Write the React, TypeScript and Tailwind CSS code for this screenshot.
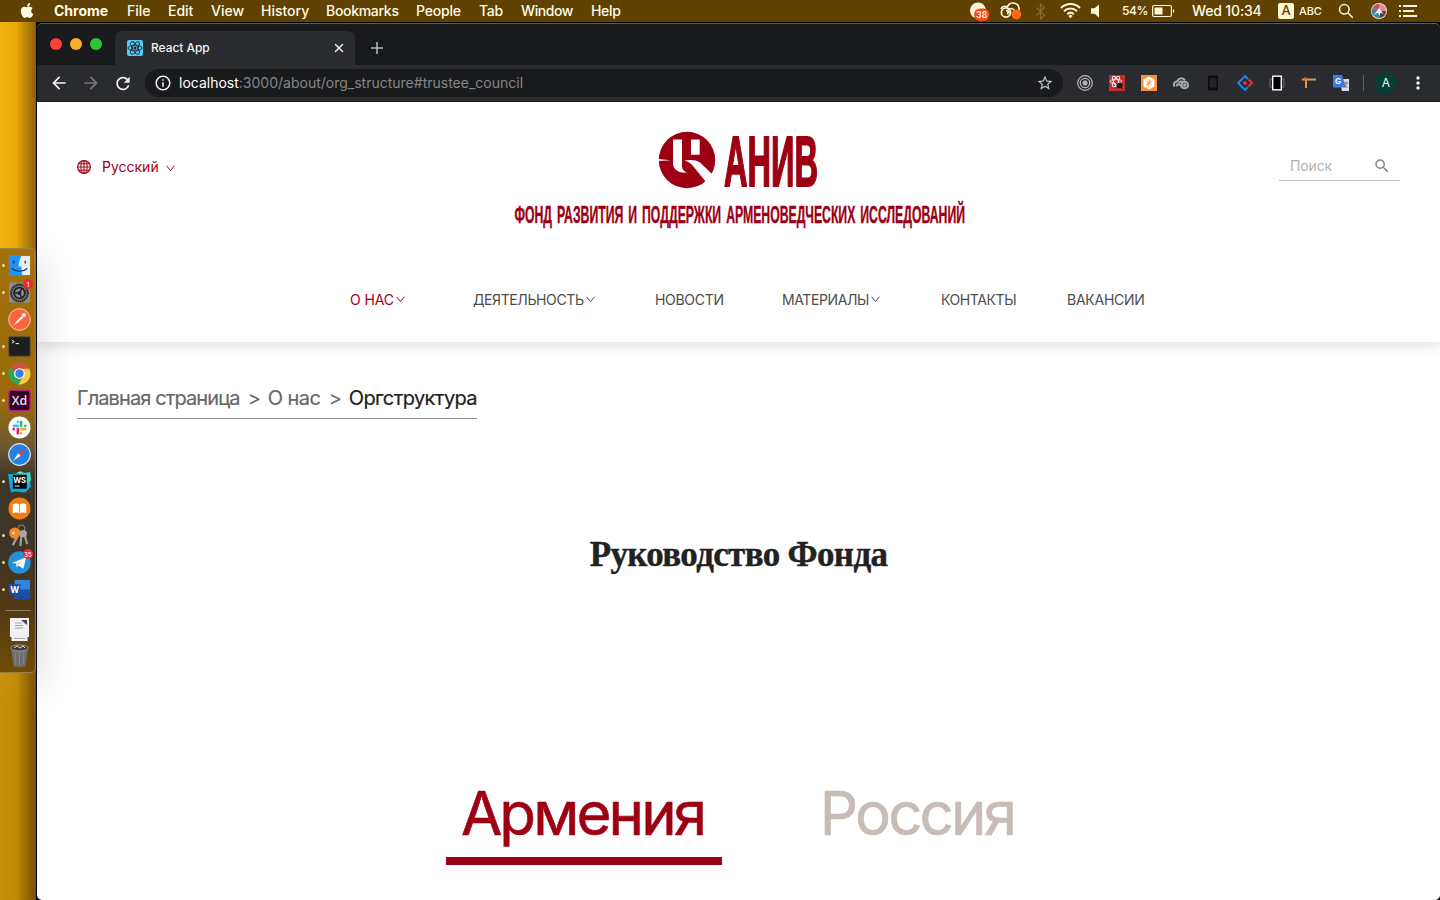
import React from "react";
import { FiX } from "react-icons/fi";
import { MdArrowBack, MdArrowForward, MdRefresh, MdInfoOutline, MdStarOutline, MdSearch, MdMoreVert } from "react-icons/md";
import { FaApple } from "react-icons/fa";

const menu: [string, string][] = [
  ["File", "w-[41px]"],
  ["Edit", "w-[43px]"],
  ["View", "w-[50px]"],
  ["History", "w-[65px]"],
  ["Bookmarks", "w-[90px] tracking-[-0.3px]"],
  ["People", "w-[63px] tracking-[-0.2px]"],
  ["Tab", "w-[42px] tracking-[-0.3px]"],
  ["Window", "w-[70px] tracking-[-0.4px]"],
  ["Help", "w-[60px] tracking-[-0.3px]"],
];

function StatusIcons() {
  return (
    <svg width="150" height="22" viewBox="0 0 150 22" className="shrink-0">
      <circle cx="8" cy="10.5" r="8" fill="#fff6d8" />
      <rect x="4" y="8.500" width="15.500" height="12.500" rx="6.200" fill="#ff4613" />
      <text x="11.800" y="18.200" textAnchor="middle" fontSize="8.500" fontWeight="600" fill="#fff" fontFamily="Inter, sans-serif">38</text>
      <g fill="none" stroke="#fff6d8" strokeWidth="1.700">
        <circle cx="36" cy="12.500" r="4.600" />
        <path d="M31 9c1-2.500 4-3.200 6.500-2.200A6 6 0 0 1 49 10" />
        <path d="M38.500 14.500c-2-2-1-6 2.500-6 2 0 3 1 4 2.500M36 10.500c2 0 3 1 4.500 3" strokeWidth="1.400" />
      </g>
      <circle cx="46.500" cy="14.500" r="4.800" fill="#ff6a13" />
      <path d="M66.500 7.500l8 8-4 3.500V4l4 3.500-8 8" fill="none" stroke="#8a6a2c" strokeWidth="1.200" />
      <g fill="none" stroke="#fff6d8" strokeWidth="2">
        <path d="M91 8c5.500-5.200 13.500-5.200 19 0" />
        <path d="M94 11.200c3.800-3.600 9.200-3.600 13 0" />
        <path d="M97.200 14.200c2-1.900 4.600-1.900 6.600 0" />
      </g>
      <path d="M98.300 16l2.200-1.600 2.200 1.600-2.200 2.200z" fill="#fff6d8" />
      <path d="M121 8.200h3.600l4.400-3.700v13l-4.400-3.700H121z" fill="#fff6d8" />
    </svg>
  );
}

function MenuBar() {
  return (
    <header className="flex h-[22px] w-full shrink-0 items-center bg-[#5f4202] text-[14px] font-medium text-[#fffbe6]">
      <FaApple className="mb-[2px] ml-[20px] h-[17px] w-[14px]" />
      <span className="ml-[20px] w-[73px] pb-[2px] font-bold">Chrome</span>
      {menu.map(([label, cls]) => (
        <span key={label} className={`pb-[2px] ${cls}`}>{label}</span>
      ))}
      <div className="ml-[319px] flex h-full items-center">
        <StatusIcons />
        <span className="ml-[2px] w-[30px] text-[12px] tracking-[-0.4px]">54%</span>
        <svg width="24" height="14" viewBox="0 0 24 14" className="shrink-0">
          <rect x="0.600" y="1.500" width="18.800" height="11" rx="1.500" fill="none" stroke="#fff6d8" strokeWidth="1.200" />
          <rect x="2.500" y="3.500" width="8" height="7" fill="#fff6d8" />
          <path d="M21 5v4c1.800-.8 1.800-3.200 0-4z" fill="#fff6d8" />
        </svg>
        <span className="ml-[16px] w-[86px] pb-[2px] tracking-[-0.15px]">Wed 10:34</span>
        <span className="flex h-[16px] w-[16px] items-center justify-center rounded-[2px] bg-[#fff6d8] text-[13px] text-[#5f4202]">A</span>
        <span className="ml-[5px] w-[39px] text-[11px] tracking-[-0.1px]">ABC</span>
        <svg width="16" height="16" viewBox="0 0 16 16" fill="none" stroke="#fff6d8" strokeWidth="1.500">
          <circle cx="6.300" cy="6.300" r="4.800" />
          <path d="M9.800 9.800l5 5" />
        </svg>
        <svg width="16" height="16" viewBox="0 0 16 16" className="ml-[17px]">
          <circle cx="8" cy="8" r="8" fill="#f2e6dc" />
          <path d="M8 8L1.500 5A7 7 0 0 1 8 1z" fill="#c9506a" />
          <path d="M8 8V1a7 7 0 0 1 7 7z" fill="#e9849c" />
          <path d="M8 8h7a7 7 0 0 1-6 7z" fill="#4b4446" />
          <path d="M8 8l1 7a7 7 0 0 1-7.500-10z" fill="#3f87a0" />
          <path d="M8 5l4.500 6-3.500-1.500V13L7 9.500 3 12z" fill="#fff" />
        </svg>
        <svg width="18" height="14" viewBox="0 0 18 14" className="ml-[12px]" stroke="#fff6d8" strokeWidth="2">
          <path d="M0 2h2M4 2h14M0 7h2M4 7h11M0 12h2M4 12h14" />
        </svg>
      </div>
    </header>
  );
}

function Tile({ children }: { children: React.ReactNode }) {
  return (
    <svg width="23" height="23" viewBox="0 0 24 24" className="shrink-0">
      {children}
    </svg>
  );
}

const dock: { dot: boolean; art: React.ReactNode }[] = [
  {
    dot: true,
    art: (
      <>
        <rect x="1" y="2" width="22" height="20" fill="#e4ecf4" />
        <path d="M1 2h13c-2 4-3 7-3 11h3c0 3 0 6 1 9H1z" fill="#1e93f5" />
        <path d="M6 7v3M18 7v3M4 15c4 4 12 4 16 0" stroke="#1b2b44" strokeWidth="1.300" fill="none" />
      </>
    ),
  },
  {
    dot: true,
    art: (
      <>
        <rect x="1" y="1.500" width="22" height="21" rx="1.500" fill="#8c8d90" />
        <circle cx="12" cy="12.500" r="8.700" fill="#77787b" stroke="#2b2b2c" strokeWidth="2.200" strokeDasharray="1.800 0.500" />
        <circle cx="12" cy="12.500" r="5.600" fill="#8c8d90" stroke="#222" strokeWidth="1.800" />
        <circle cx="12" cy="12.500" r="2" fill="#222" />
        <path d="M12 12.500l3-5M12 12.500l2.500 5.500M12 12.500H6" stroke="#222" strokeWidth="1.400" />
      </>
    ),
  },
  {
    dot: false,
    art: (
      <>
        <circle cx="12" cy="12" r="11.300" fill="#fb653c" stroke="#e8d3bf" strokeWidth="1" />
        <path d="M5.500 18.500l5-6.500 4-3.500 1.500 1.500-4.500 4z" fill="#fff" />
        <circle cx="16.700" cy="7.300" r="2.200" fill="#fff" />
      </>
    ),
  },
  {
    dot: true,
    art: (
      <>
        <rect x="1" y="2" width="22" height="20" rx="0.800" fill="#1d1e20" stroke="#414144" />
        <path d="M4 5.500l2.500 1.500L4 8.500M8 9h3.500" stroke="#fff" fill="none" />
      </>
    ),
  },
  {
    dot: true,
    art: (
      <>
        <circle cx="12" cy="12" r="11.500" fill="#32a552" />
        <path d="M12 12L2.200 6A11.500 11.500 0 0 1 22 6.500z" fill="#d84b3e" />
        <path d="M12 7h10.300A11.500 11.500 0 0 1 11 23.500l5-9z" fill="#fccb3d" />
        <circle cx="12" cy="12" r="5.600" fill="#fff" />
        <circle cx="12" cy="12" r="4.400" fill="#3d7ded" />
      </>
    ),
  },
  {
    dot: true,
    art: (
      <>
        <rect x="1" y="1.500" width="22" height="21" rx="3" fill="#2c001e" stroke="#c4168c" strokeWidth="1.400" />
        <text x="12" y="16.800" textAnchor="middle" fontSize="13" fontWeight="600" fill="#fbd9f2" fontFamily="'Open Sans', sans-serif">Xd</text>
      </>
    ),
  },
  {
    dot: false,
    art: (
      <>
        <circle cx="12" cy="12" r="11.500" fill="#fff" />
        <g strokeWidth="2.700" strokeLinecap="round">
          <path d="M10.300 6v.1M6 10.300h4.300" stroke="#37c5ef" />
          <path d="M13.700 6v4.300M18 10.300h.1" stroke="#2fb67c" />
          <path d="M13.700 13.700H18M13.700 18v.1" stroke="#ebb02e" />
          <path d="M10.300 13.700V18M6 13.700h.1" stroke="#df1f5a" />
        </g>
      </>
    ),
  },
  {
    dot: false,
    art: (
      <>
        <circle cx="12" cy="12" r="11.300" fill="#2580df" stroke="#dbe3ea" strokeWidth="1.200" />
        <path d="M19 5l-5.800 8.200-2.400-2.400z" fill="#f33b34" />
        <path d="M5 19l5.800-8.200 2.400 2.400z" fill="#f4f4f4" />
      </>
    ),
  },
  {
    dot: true,
    art: (
      <>
        <path d="M0 4.500l7-.5 6-3 5 2 5-.500 1 8-1 2 1 5-6 6-10-1-5 1z" fill="#12a9de" />
        <path d="M14 4l9-2 1 8-2 4-5-2z" fill="#3fd0c0" />
        <path d="M9 3l4-1.500 3 2.500z" fill="#c8e650" />
        <rect x="5" y="5" width="14.500" height="14.500" fill="#000" />
        <text x="12.200" y="13.500" textAnchor="middle" fontSize="8" fontWeight="700" fill="#fff" fontFamily="Inter, sans-serif">WS</text>
        <path d="M7 16.800h5" stroke="#fff" />
      </>
    ),
  },
  {
    dot: false,
    art: (
      <>
        <circle cx="12" cy="12" r="11.500" fill="#f07d12" />
        <path d="M5 7.500c3-1 5-1 7 .5 2-1.500 4-1.500 7-.5v9.500c-3-1-5-1-7 .5-2-1.500-4-1.500-7-.5z" fill="#fff" />
        <path d="M12 8v9.500" stroke="#f07d12" />
      </>
    ),
  },
  {
    dot: true,
    art: (
      <>
        <circle cx="14" cy="4.500" r="3.500" fill="none" stroke="#8f8a80" />
        <path d="M12 9L5 22M14 10l-1 13M17 10l3 11" stroke="#9b9a97" strokeWidth="2.400" />
        <circle cx="7" cy="9.500" r="5.800" fill="#f08a24" />
        <circle cx="5.500" cy="9.500" r="1.500" fill="#e9d9c4" />
        <circle cx="16" cy="10" r="3.800" fill="#a9a8a5" />
      </>
    ),
  },
  {
    dot: true,
    art: (
      <>
        <circle cx="12" cy="12" r="11.700" fill="#2391d9" />
        <path d="M4 12.500L19 6.500l-3 12-5-3.500-2 2-.5-4z" fill="#fff" />
        <path d="M9 13.500l6-4.500-4.500 6z" fill="#c3dcee" />
      </>
    ),
  },
  {
    dot: true,
    art: (
      <>
        <rect x="7" y="2" width="16" height="20" fill="#2f86dd" />
        <rect x="7" y="12" width="16" height="10" fill="#1a4fa8" />
        <rect x="1" y="6.500" width="12" height="11" fill="#1b4da8" />
        <text x="7" y="15.500" textAnchor="middle" fontSize="9" fontWeight="700" fill="#fff" fontFamily="Inter, sans-serif">W</text>
      </>
    ),
  },
];

function DockBadge({ text }: { text: string }) {
  return (
    <span className="absolute -right-[2px] -top-[2px] flex h-[10px] w-[10px] items-center justify-center rounded-full bg-[#f2242f] text-[6px] font-medium text-white">
      {text}
    </span>
  );
}

function Dock() {
  return (
    <aside className="flex w-[36px] shrink-0 flex-col bg-[linear-gradient(180deg,transparent_25%,rgba(60,35,0,0.24)_78%),linear-gradient(90deg,#f3b20c_0%,#eaa90b_45%,#8a6005_100%)] pt-[226px]">
      <div className="flex h-[425px] flex-col rounded-r-[5px] border-y border-r border-[#9c7f42] bg-[linear-gradient(180deg,#a3700a_0%,#9a6b0b_36%,#6f5a33_46%,#403729_54%,#3d3428_72%,#503814_84%,#704c08_100%)] pt-[3px]">
        {dock.map((d, i) => (
          <div key={i} className="relative flex h-[27px] shrink-0 items-center">
            <span className={d.dot ? "ml-[2px] mr-[3px] h-[3px] w-[3px] rounded-full bg-[#ead9a6]" : "ml-[2px] mr-[3px] w-[3px]"} />
            <span className="relative block">
              <Tile>{d.art}</Tile>
              {i === 1 && <DockBadge text="1" />}
              {i === 11 && <DockBadge text="35" />}
            </span>
          </div>
        ))}
        <div className="ml-[5px] mt-[7px] h-px w-[26px] shrink-0 bg-[#8c7a58]" />
        <svg width="20" height="23" viewBox="0 0 20 23" className="ml-[10px] mt-[7px] shrink-0">
          <path d="M0 0h19v19h-1.500v4h-16v-4H0z" fill="#f1f1f1" />
          <path d="M5 5h7M5 7.500h8M5 10h8M4 20.500h11" stroke="#a5a5a5" />
          <path d="M11 2h6v5z" fill="#444" />
        </svg>
        <svg width="20" height="24" viewBox="0 0 20 24" className="ml-[10px] mt-[3px] shrink-0">
          <path d="M1 4h17l-2.500 18c-3 1.500-9 1.500-12 0z" fill="#6d6d6b" />
          <path d="M5 8l1 13M9.500 8v14M14 8l-1 13" stroke="#868684" />
          <ellipse cx="9.500" cy="4" rx="8.800" ry="3" fill="#3a3a39" stroke="#9c9c9a" />
          <path d="M4 4l3-2 3 2 3-2 2 2" stroke="#ddd" fill="none" />
        </svg>
      </div>
    </aside>
  );
}

function ReactIcon() {
  return (
    <svg width="16" height="16" viewBox="0 0 16 16">
      <rect width="16" height="16" rx="2" fill="#53c9f5" />
      <g fill="none" stroke="#20232a" strokeWidth="0.900">
        <ellipse cx="8" cy="8" rx="7" ry="2.700" />
        <ellipse cx="8" cy="8" rx="7" ry="2.700" transform="rotate(60 8 8)" />
        <ellipse cx="8" cy="8" rx="7" ry="2.700" transform="rotate(120 8 8)" />
      </g>
      <circle cx="8" cy="8" r="1.500" fill="#20232a" />
    </svg>
  );
}

const extensions: React.ReactNode[] = [
  <g fill="none" stroke="#b4b5b7"><circle cx="8" cy="8" r="7.300" strokeWidth="1.200" /><circle cx="8" cy="8" r="4.700" strokeWidth="1.300" /><circle cx="8" cy="8" r="2.200" fill="#b4b5b7" /></g>,
  <g><rect width="16" height="16" fill="#cc2b2b" /><g fill="none" stroke="#fff" strokeWidth="0.900"><ellipse cx="7" cy="6.500" rx="5.800" ry="2.300" /><ellipse cx="7" cy="6.500" rx="5.800" ry="2.300" transform="rotate(60 7 6.500)" /><ellipse cx="7" cy="6.500" rx="5.800" ry="2.300" transform="rotate(120 7 6.500)" /></g><ellipse cx="10.500" cy="10.500" rx="3" ry="2.700" fill="#1d1414" /><path d="M7 8l7 6M13 7.500l-5.500 6" stroke="#1d1414" /></g>,
  <g><rect width="16" height="16" fill="#ff8f35" /><path d="M8 1.500l5.500 3v7L8 14.500l-5.500-3v-7z" fill="#fff" /><path d="M9 4.500L7 11.500M5.500 6.500l5 3M10.500 6l-5 4" stroke="#ffa04d" strokeWidth="1.100" /></g>,
  <g fill="none" stroke="#a8aaac" strokeWidth="2"><path d="M1.500 11.500C0 8.500 2 6 4.500 6.500 5 3 10 2 12 5.500" /><circle cx="11.800" cy="10" r="3.300" /><circle cx="11.800" cy="10" r="0.800" /><path d="M3.500 11.500c0-2.500 3-3 4-1l2 2.500M6 7.500c2-1.500 4-1 4.500 0" /></g>,
  <g><rect x="3" y="0.500" width="10" height="15" rx="1.200" fill="#0c0c0d" /><rect x="4.500" y="3" width="7" height="9.500" fill="#232427" /></g>,
  <g fill="none" strokeWidth="2"><path d="M11 4L8 1 1.200 8 8 15l3-3" stroke="#1686f3" /><path d="M11.500 4.500L15 8l-3.500 3.500" stroke="#e8304b" /><circle cx="8" cy="8" r="2" fill="#e8304b" stroke="none" /></g>,
  <g fill="none"><rect x="3.700" y="1.200" width="8.600" height="13.600" fill="#000" stroke="#fff" strokeWidth="1.400" /><path d="M3 4H1v8h2M13 4h2v8h-2" stroke="#696a6c" /></g>,
  <g><path d="M1 3.500h14v2H6v7.500H4V5.500H1z" fill="#e09550" /><path d="M3 2.500h3v2H3z" fill="#bd6c2c" /></g>,
  <g><path d="M6 4h10v12H9z" fill="#d8dade" /><path d="M0 0h9l4 12.500H1a1 1 0 0 1-1-1z" fill="#3f79e6" /><text x="2" y="9" fontSize="8" fontWeight="700" fill="#fff" fontFamily="Inter, sans-serif">G</text><path d="M10 8h5M12.500 6.500V8M14 8c-.5 2-2 3.500-3 4M11.500 9c.5 1.500 2 3 3 3.500" stroke="#5f6570" fill="none" strokeWidth="0.800" /></g>,
];

function BrowserChrome() {
  return (
    <div className="flex h-[79px] shrink-0 flex-col rounded-t-[5px] border-b border-[#1d1e20] bg-[#2a2b2f]">
      <div className="flex h-[42px] shrink-0 rounded-t-[5px] border-t border-[#5d5d5e] bg-[#191a1c]">
        <div className="flex w-[78px] gap-[8px] pl-[13px] pt-[14px]">
          <span className="h-[12px] w-[12px] rounded-full bg-[#fc4040]" />
          <span className="h-[12px] w-[12px] rounded-full bg-[#fdae27]" />
          <span className="h-[12px] w-[12px] rounded-full bg-[#28c732]" />
        </div>
        <div className="mt-[7px] flex h-[34px] w-[240px] items-center rounded-t-[8px] bg-[#2a2b2f] pl-[12px] text-[12px] font-medium text-[#f1f3f4]">
          <ReactIcon />
          <span className="ml-[8px] w-[181px] tracking-[-0.05px]">React App</span>
          <FiX className="h-[14px] w-[14px]" strokeWidth={2.500} />
        </div>
        <svg width="14" height="14" viewBox="0 0 14 14" className="ml-[15px] mt-[17px]" stroke="#b3b5b8" strokeWidth="1.600">
          <path d="M7 1v12M1 7h12" />
        </svg>
      </div>
      <div className="flex h-[36px] items-center pl-[12px] text-[#f1f3f4]">
        <MdArrowBack className="h-[20px] w-[20px]" />
        <MdArrowForward className="ml-[12px] h-[20px] w-[20px] text-[#77787b]" />
        <MdRefresh className="ml-[12px] h-[21px] w-[20px]" />
        <div className="ml-[12px] flex h-[28px] w-[918px] items-center rounded-full bg-[#191a1c] pl-[9px] pr-[9px] text-[14px]">
          <MdInfoOutline className="h-[18px] w-[18px]" />
          <span className="ml-[7px] flex-1 whitespace-nowrap pb-[2px] text-[#86878a]">
            <span className="text-white">localhost</span>:3000/about/org_structure#trustee_council
          </span>
          <MdStarOutline className="h-[18px] w-[18px] text-[#c3c5c8]" />
        </div>
        <div className="ml-[14px] flex gap-[16px]">
          {extensions.map((e, i) => (
            <svg key={i} width="16" height="16" viewBox="0 0 16 16">{e}</svg>
          ))}
        </div>
        <span className="ml-[14px] h-[16px] w-px bg-[#5f6063]" />
        <span className="ml-[11px] flex h-[22px] w-[22px] items-center justify-center rounded-full bg-[#083f33] text-[12px]">A</span>
        <MdMoreVert className="ml-[11px] h-[20px] w-[20px]" />
      </div>
    </div>
  );
}

function Chevron({ className = "" }: { className?: string }) {
  return (
    <svg width="9" height="7" viewBox="0 0 9 7" fill="none" stroke="currentColor" strokeWidth="1" className={className}>
      <path d="M0.600 0.800L4.500 5.600 8.400 0.800" />
    </svg>
  );
}

function Logo() {
  return (
    <svg width="460" height="104" viewBox="510 126 460 104" fill="#9d0013" className="overflow-visible">
      <circle cx="687" cy="160" r="28.200" />
      <g fill="#fff">
        <path d="M673 139.500h9v27c0 3 2 5 5 6-8 1-14-3-14-9z" />
        <path d="M691 139.500h8.700v15.300H691z" />
        <path d="M684 160.500c6-1 12-1 16 2l12 11.500 2.500 3.500-8.500 4.500-13-16c-2.500-3-5-4.500-9-5.500z" />
        <path d="M658 159l13 1.300-13 .8z" />
      </g>
      <g fontWeight="700" fontFamily="'Liberation Sans Narrow', 'Liberation Sans', sans-serif" stroke="#9d0013" strokeLinejoin="round">
        <text x="724" y="185.500" fontSize="71" strokeWidth="2" textLength="94" lengthAdjust="spacingAndGlyphs">АНИВ</text>
        <text x="514.500" y="222.500" fontSize="23.500" strokeWidth="0.400" wordSpacing="3" textLength="450.500" lengthAdjust="spacingAndGlyphs">ФОНД РАЗВИТИЯ И ПОДДЕРЖКИ АРМЕНОВЕДЧЕСКИХ ИССЛЕДОВАНИЙ</text>
      </g>
    </svg>
  );
}

const nav = [
  { label: "О НАС", w: "w-[123px]", arrow: true, tone: "text-[#9d0013] tracking-[-0.1px]" },
  { label: "ДЕЯТЕЛЬНОСТЬ", w: "w-[182px]", arrow: true, tone: "tracking-[-0.4px]" },
  { label: "НОВОСТИ", w: "w-[127px]", arrow: false, tone: "tracking-[-0.3px]" },
  { label: "МАТЕРИАЛЫ", w: "w-[159px]", arrow: true, tone: "tracking-[-0.4px]" },
  { label: "КОНТАКТЫ", w: "w-[126px]", arrow: false, tone: "tracking-[-0.4px]" },
  { label: "ВАКАНСИИ", w: "w-[90px]", arrow: false, tone: "tracking-[-0.25px]" },
];

function SiteHeader() {
  return (
    <header className="h-[240px] shrink-0 shadow-[0_3px_14px_rgba(0,0,0,0.14)]">
      <div className="flex h-[128px] items-start px-[40px]">
        <div className="mt-[54px] flex h-[22px] w-[433px] items-center text-[14px] text-[#9d0013]">
          <svg width="14" height="14" viewBox="0 0 14 14" fill="none" stroke="currentColor">
            <circle cx="7" cy="7" r="6.400" strokeWidth="1.200" />
            <ellipse cx="7" cy="7" rx="3.200" ry="6.400" />
            <path d="M7 .6v12.800M.6 7h12.800M1.500 3.800h11M1.500 10.200h11" />
          </svg>
          <span className="ml-[11px] w-[64px] pb-[2px]">Русский</span>
          <Chevron className="mt-[2px]" />
        </div>
        <div className="mt-[24px]"><Logo /></div>
        <div className="ml-auto mt-[52px] flex h-[27px] w-[121px] items-center border-b border-[#c8bcb6] pb-[2px] pl-[11px] text-[14px] text-[#b1b1b1]">
          <span className="w-[83px] pb-[2px] tracking-[-0.15px]">Поиск</span>
          <MdSearch className="h-[18px] w-[18px] text-[#858585]" />
        </div>
      </div>
      <nav className="mt-[59px] flex h-[20px] items-center pl-[313px] text-[14px] text-[#4c4c4c]">
        {nav.map((n) => (
          <div key={n.label} className={`${n.w} flex items-center whitespace-nowrap ${n.tone}`}>
            {n.label}
            {n.arrow && <Chevron className="ml-[2px]" />}
          </div>
        ))}
      </nav>
    </header>
  );
}

function Page() {
  return (
    <div className="relative flex min-h-0 flex-1 flex-col overflow-hidden rounded-b-[5px] bg-white">
      <SiteHeader />
      <div className="ml-[40px] mt-[42px] flex h-[35px] w-[400px] shrink-0 whitespace-nowrap border-b border-[#8f8f8f] text-[20px] leading-[29px] text-[#686868]">
        <span className="w-[171px] tracking-[-0.9px] [-webkit-text-stroke:0.2px_#686868]">Главная страница</span>
        <span className="w-[20px]">&gt;</span>
        <span className="w-[61px] tracking-[-0.6px] [-webkit-text-stroke:0.2px_#686868]">О нас</span>
        <span className="w-[20px]">&gt;</span>
        <span className="tracking-[-0.6px] text-[#1d1d1d] [-webkit-text-stroke:0.2px_#1d1d1d]">Оргструктура</span>
      </div>
      <h1 className="mt-[112px] h-[48px] text-center font-['Liberation_Serif',serif] text-[35px] font-bold leading-[48px] tracking-[-0.65px] text-[#222] [-webkit-text-stroke:0.4px_#222]">
        Руководство Фонда
      </h1>
      <div className="mt-[196px] flex pl-[409px] text-[60px] leading-[76px]">
        <div className="h-[90px] w-[276px] whitespace-nowrap border-b-[8px] border-[#9d0013] pr-[3px] text-center tracking-[-2.9px] text-[#9d0013] [-webkit-text-stroke:0.6px_#9d0013]">Армения</div>
        <div className="ml-[84px] h-[90px] w-[225px] whitespace-nowrap pr-[3px] text-center tracking-[-2.800px] text-[#c8bcb6] [-webkit-text-stroke:0.6px_#c8bcb6]">Россия</div>
      </div>
      <div className="pointer-events-none absolute -left-[30px] top-[146px] h-[424px] w-[30px] shadow-[0_12px_38px_rgba(0,0,0,0.18)]" />
    </div>
  );
}

export default function App() {
  return (
    <div className="flex h-[900px] w-[1440px] flex-col overflow-hidden bg-black font-['Inter',sans-serif]">
      <MenuBar />
      <div className="flex min-h-0 flex-1">
        <Dock />
        <main className="ml-[1px] flex min-w-0 flex-1 flex-col pt-px">
          <BrowserChrome />
          <Page />
        </main>
      </div>
    </div>
  );
}
